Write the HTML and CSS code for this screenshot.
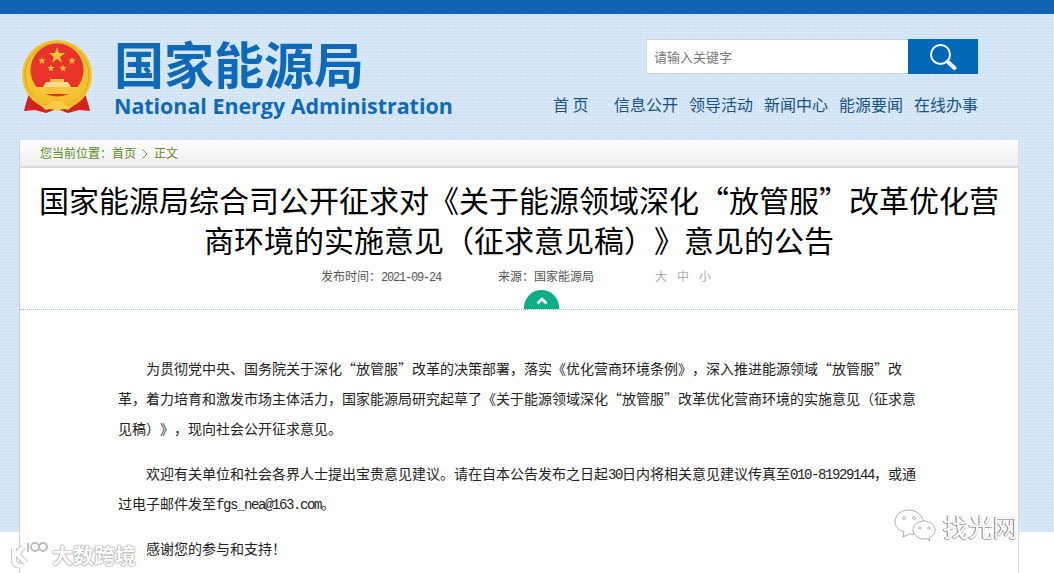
FILE: index.html
```html
<!DOCTYPE html>
<html lang="zh-CN">
<head>
<meta charset="utf-8">
<title>国家能源局</title>
<link rel="stylesheet" href="styles.css">
</head>
<body>
<div class="page">
  <div class="topbar"></div>
  <header class="header">
    <div class="brand">
      <svg class="emblem" viewBox="0 0 70 73" width="70" height="73">
        <path d="M8 50C6 58 3 65 2 71L13 70L24 73L35 69L46 73L57 70L68 71C67 65 64 58 62 50Z" fill="#d3231f"/>
        <circle cx="35" cy="35" r="35" fill="#f2c230"/>
        <circle cx="35" cy="35" r="32" fill="none" stroke="#e0a21f" stroke-width="1"/>
        <circle cx="35" cy="30" r="26.500" fill="#e8322a"/>
        <path d="M35 7l2 6h6.300l-5.100 3.800 1.900 6-5.100-3.700-5.100 3.700 1.900-6-5.100-3.800h6.300z" fill="#f6c33a"/>
        <path d="M20 17l.9 2.600h2.800l-2.200 1.700.8 2.700-2.300-1.600-2.300 1.600.8-2.700-2.200-1.700h2.800zM50 17l.9 2.600h2.800l-2.200 1.700.8 2.700-2.300-1.600-2.300 1.600.8-2.700-2.200-1.700h2.800zM29 24.500l.9 2.600h2.800l-2.200 1.700.8 2.700-2.300-1.600-2.300 1.600.8-2.700-2.200-1.700h2.800zM41 24.500l.9 2.600h2.800l-2.200 1.700.8 2.700-2.300-1.600-2.300 1.600.8-2.700-2.200-1.700h2.800z" fill="#f6c33a"/>
        <path d="M24 42h22l3 5H21z" fill="#f8dc8c"/>
        <path d="M28 39h14v3H28z" fill="#f3c04a"/>
        <path d="M12 47h46v3l-3 4H15l-3-4z" fill="#f6c33a"/>
        <path d="M11 54C18 62 27 60 35 58C43 60 52 62 59 54L57 61C50 66 43 64 35 63C27 64 20 66 13 61z" fill="#f3bd2c"/>
        <path d="M19 66l8-1 4-4h8l4 4 8 1-5 4-6-2-5 3-5-3-6 2z" fill="#f6cc4a"/>
      </svg>
      <div class="brand-text">
        <div class="brand-cn">国家能源局</div>
        <div class="brand-en">National Energy Administration</div>
      </div>
    </div>
    <div class="tools">
      <form class="search">
        <div class="search-input">请输入关键字</div>
        <div class="search-btn">
          <svg viewBox="0 0 28 28" width="28" height="28">
            <circle cx="11.500" cy="11.500" r="9.500" fill="none" stroke="#fff" stroke-width="2"/>
            <path d="M18.500 18.500l7 6.500" stroke="#e6f0f8" stroke-width="4" stroke-linecap="round"/>
          </svg>
        </div>
      </form>
      <nav class="nav">
        <a class="nav-home">首 页</a>
        <a>信息公开</a>
        <a>领导活动</a>
        <a>新闻中心</a>
        <a>能源要闻</a>
        <a>在线办事</a>
      </nav>
    </div>
  </header>
  <main class="card">
    <div class="crumb">您当前位置：首页<svg class="crumb-sep" viewBox="0 0 6 10" width="6" height="10"><path d="M.5.500L5 5 .5 9.500" fill="none" stroke="#6b8f45" stroke-width="1"/></svg>正文</div>
    <h1 class="title">国家能源局综合司公开征求对《关于能源领域深化“放管服”改革优化营商环境的实施意见（征求意见稿）》意见的公告</h1>
    <div class="meta">
      <span class="meta-date">发布时间：<span class="mono">2021-09-24</span></span>
      <span class="meta-source">来源：国家能源局</span>
      <span class="meta-size"><span>大</span><span>中</span><span>小</span></span>
      <div class="toggle">
        <svg viewBox="0 0 12 9" width="12" height="9"><path d="M1.500 7.500L6 3l4.500 4.500" fill="none" stroke="#eafaf4" stroke-width="3"/></svg>
      </div>
    </div>
    <article class="body">
      <p>为贯彻党中央、国务院关于深化“放管服”改革的决策部署，落实《优化营商环境条例》，深入推进能源领域“放管服”改革，着力培育和激发市场主体活力，国家能源局研究起草了《关于能源领域深化“放管服”改革优化营商环境的实施意见（征求意见稿）》，现向社会公开征求意见。</p>
      <p>欢迎有关单位和社会各界人士提出宝贵意见建议。请在自本公告发布之日起<span class="mono-body">30</span>日内将相关意见建议传真至<span class="mono-body">010-81929144</span>，或通过电子邮件发至<span class="mono-body">fgs_nea@163.com</span>。</p>
      <p>感谢您的参与和支持！</p>
    </article>
  </main>
</div>
<div class="wm wm-left">
  <svg viewBox="0 0 40 28" width="40" height="28"><g fill="none"><g stroke="#c8c8c8" stroke-width="6"><path d="M4 8v12c0 4 3 6 8 6M13 7L7 14l9 9"/></g><g stroke="#fff" stroke-width="4"><path d="M4 8v12c0 4 3 6 8 6M13 7L7 14l9 9"/></g><g stroke="#bdbdbd" stroke-width="2"><path d="M18 3v9"/><circle cx="25" cy="7" r="4"/><circle cx="33" cy="7" r="4"/></g></g></svg>
  <span>大数跨境</span>
</div>
<div class="wm wm-right">
  <svg viewBox="0 0 42 36" width="42" height="36"><path d="M10 24l-1 5 6-3c2 .5 4 .4 5 .3C18 21 21 15 30 14 28 7 22 2 15 2 7 2 1 7 1 14c0 4 3 8 9 10z" fill="#fff" stroke="#999" stroke-width=".8"/><path d="M36 33l-1-3c4-2 6-5 6-8 0-5-5-9-11-9s-11 4-11 9 5 9 11 9c1 0 2 0 3-.5z" fill="#fff" stroke="#999" stroke-width=".8"/><circle cx="10" cy="10" r="1.500" fill="none" stroke="#999" stroke-width=".7"/><circle cx="20" cy="10" r="1.500" fill="none" stroke="#999" stroke-width=".7"/><circle cx="26" cy="20" r="1.200" fill="none" stroke="#999" stroke-width=".7"/><circle cx="35" cy="20" r="1.200" fill="none" stroke="#999" stroke-width=".7"/></svg>
  <span>找光网</span>
</div>
</body>
</html>
```
FILE: styles.css
```css
* { box-sizing: border-box; }
html, body {
  margin: 0;
  height: 573px;
  overflow: hidden;
  background: #fff;
}
body {
  position: relative;
  font-family: "Noto Sans CJK SC", "Liberation Sans", sans-serif;
  color: #222;
  text-spacing-trim: space-all;
}
.page {
  height: 573px;
  overflow: hidden;
  background-image:
    linear-gradient(to bottom, transparent 532px, #fff 532px),
    repeating-linear-gradient(90deg, rgba(255,255,255,.16) 0 1px, transparent 1px 3px),
    repeating-linear-gradient(0deg, rgba(255,255,255,.16) 0 1px, transparent 1px 3px);
  background-color: #d0e3f6;
}
.topbar {
  height: 14px;
  background: #1064b6;
}
.header {
  display: flex;
  justify-content: space-between;
  height: 126px;
  padding: 26px 76px 0 22px;
}
.brand { display: flex; align-items: flex-start; }
.emblem { flex: none; }
.brand-text {
  margin-left: 22px;
  color: #0f69b9;
}
.brand-cn {
  font-size: 50px;
  font-weight: 700;
  line-height: 50px;
  margin-top: -3px;
  white-space: nowrap;
}
.brand-en {
  font-family: "Open Sans", sans-serif;
  font-size: 21.4px;
  font-weight: 700;
  line-height: 28px;
  margin-top: 5px;
  white-space: nowrap;
}
.tools {
  display: flex;
  flex-direction: column;
  align-items: flex-end;
}
.search {
  display: flex;
  height: 35px;
  margin: -1px 0 0;
}
.search-input {
  width: 262px;
  background: #fff;
  border: 1px solid #c6d2dd;
  border-right: 0;
  padding-left: 7px;
  font-size: 13px;
  line-height: 34px;
  color: #777;
}
.search-btn {
  width: 70px;
  background: #0068b7;
  display: flex;
  align-items: center;
  justify-content: center;
}
.nav {
  display: flex;
  gap: 11px;
  margin-top: 18px;
  font-size: 16px;
  line-height: 24px;
  color: #1b5284;
  white-space: nowrap;
}
.nav-home { margin-right: 13px; width: 37px; }
.card {
  width: 998px;
  margin-left: 20px;
  background: #fff;
  height: 440px;
  box-shadow: -1px 0 0 #ccc, 1px 0 0 #ddd;
}
.crumb {
  height: 28px;
  padding-left: 20px;
  font-size: 12px;
  line-height: 26px;
  color: #5b8a1f;
  background: linear-gradient(#fff, #eeeeee);
  border-bottom: 2px solid #d8d9dc;
}
.crumb-sep { margin: 0 6px; vertical-align: -1px; }
.title {
  margin: 11px auto 0;
  width: 960px;
  font-size: 30px;
  font-weight: 400;
  line-height: 40px;
  text-align: center;
  color: #000;
}
.meta {
  position: relative;
  height: 46px;
  margin-top: 5px;
  font-size: 12px;
  line-height: 24px;
  color: #555;
  border-bottom: 1px dotted #9cc4b8;
  display: flex;
  padding-left: 301px;
}
.mono {
  font-family: "Liberation Mono", monospace;
  letter-spacing: -1.2px;
}
.meta-date { width: 177px; }
.meta-source { width: 157px; }
.meta-size { color: #aaa; display: flex; gap: 10px; }
.toggle {
  position: absolute;
  left: 504px;
  bottom: 0;
  width: 35px;
  height: 19px;
  background: #0cae85;
  border-radius: 18px 18px 0 0;
  display: flex;
  justify-content: center;
  padding-top: 6px;
}
.toggle svg { display: block; }
.body {
  padding: 43px 100px 0 98px;
  font-size: 14px;
  line-height: 30px;
  color: #222;
}
.body p {
  margin: 0 0 15px;
  text-indent: 28px;
}
.mono-body {
  font-family: "Liberation Mono", monospace;
  letter-spacing: -1.4px;
  line-height: 0;
}
.wm {
  position: absolute;
  display: flex;
  align-items: center;
  color: #fff;
  white-space: nowrap;
}
.wm-left {
  left: 10px;
  top: 540px;
  gap: 2px;
  font-size: 21px;
  font-weight: 700;
  line-height: 28px;
  text-shadow: 0 0 2px #999, 0 0 1px #999, 0 0 1px #999;
}
.wm-right {
  left: 894px;
  top: 508px;
  gap: 7px;
  font-size: 25px;
  color: #fff;
  text-shadow: -1px 0 0 #777, 0 1px 0 #aaa;
}
```
